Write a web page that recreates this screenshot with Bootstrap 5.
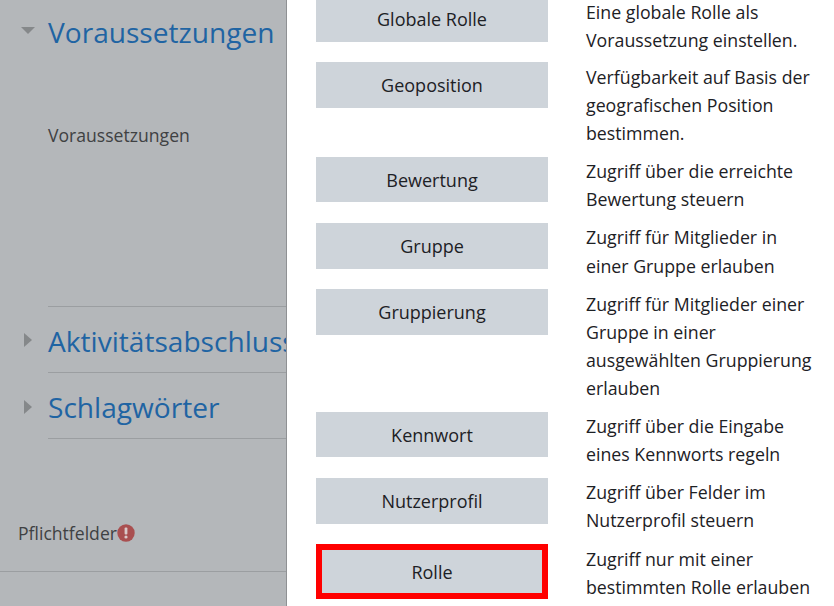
<!doctype html>
<html lang="de">
<head>
<meta charset="utf-8">
<title>Voraussetzungen</title>
<link href="https://cdn.jsdelivr.net/npm/bootstrap@5.3.0/dist/css/bootstrap.min.css" rel="stylesheet">
<style>
html,body{height:606px;overflow:hidden;}
body{font-family:"Open Sans","Noto Sans",sans-serif;font-size:17.75px;line-height:1.5;color:#1d2125;background:#fff;}
.shell{height:606px;}
.backpane{width:287px;flex:none;background:#b4b7ba;border-right:1px solid #8f9194;overflow:hidden;color:#3f4143;position:relative;font-size:17.6px;}
.sect{display:flex;align-items:center;height:66px;margin-left:48px;padding-top:2px;border-bottom:1px solid #9b9ea1;white-space:nowrap;}
.sect-title{font-size:28.1px;line-height:36px;color:#1f64a3;margin:0;font-weight:400;}
.sect-first{height:auto;border:0;padding-top:14px;}
.caret{position:absolute;left:20px;}
.req-label{margin:72px 0 0 48px;height:185px;border-bottom:1px solid #9b9ea1;}
.foot-note{margin-top:79px;padding:0 0 24px 18px;border-bottom:1px solid #9b9ea1;height:54px;line-height:28px;}
.pick{flex:1;margin-top:-3.85px;padding-left:29px;}
.pick-row{display:flex;margin-bottom:9.6px;}
.pick-row-top{margin-bottom:8px;}
.pick-row-top .pick-text{margin-top:1.6px;}
.pick-btn{width:232px;height:45.6px;flex:none;background:#ced4da;border:0;border-radius:0;color:#1d2125;font-size:18px;padding:1.2px 0 0;margin-right:38px;}
.pick-btn.is-marked{height:55px;border:6px solid #f00;}
.pick-text{width:232px;line-height:28.125px;padding-top:.4px;}
</style>
</head>
<body>
<div class="shell d-flex">
  <div class="backpane">
    <svg class="caret" style="top:27px" width="16" height="8" viewBox="0 0 16 8"><path d="M1 0h14L8 7z" fill="#85888a"/></svg>
    <div class="sect sect-first"><h3 class="sect-title">Voraussetzungen</h3></div>
    <div class="req-label">Voraussetzungen</div>
    <svg class="caret" style="top:332px;left:24px" width="9" height="16" viewBox="0 0 9 16"><path d="M0 1v14l8-7z" fill="#85888a"/></svg>
    <div class="sect"><h3 class="sect-title">Aktivitätsabschluss</h3></div>
    <svg class="caret" style="top:399px;left:24px" width="9" height="16" viewBox="0 0 9 16"><path d="M0 1v14l8-7z" fill="#85888a"/></svg>
    <div class="sect"><h3 class="sect-title">Schlagwörter</h3></div>
    <div class="foot-note d-flex align-items-center">Pflichtfelder<svg width="18" height="18" viewBox="0 0 18 18"><circle cx="9" cy="9" r="8.7" fill="#a94f50"/><rect x="7.6" y="3.5" width="2.8" height="7" rx="1" fill="#d9c9c9"/><circle cx="9" cy="13" r="1.6" fill="#d9c9c9"/></svg></div>
  </div>
  <div class="pick">
    <div class="pick-row pick-row-top"><button class="btn pick-btn">Globale Rolle</button><div class="pick-text">Eine globale Rolle als Voraussetzung einstellen.</div></div>
    <div class="pick-row"><button class="btn pick-btn">Geoposition</button><div class="pick-text">Verfügbarkeit auf Basis der geografischen Position bestimmen.</div></div>
    <div class="pick-row"><button class="btn pick-btn">Bewertung</button><div class="pick-text">Zugriff über die erreichte Bewertung steuern</div></div>
    <div class="pick-row"><button class="btn pick-btn">Gruppe</button><div class="pick-text">Zugriff für Mitglieder in einer Gruppe erlauben</div></div>
    <div class="pick-row"><button class="btn pick-btn">Gruppierung</button><div class="pick-text">Zugriff für Mitglieder einer Gruppe in einer ausgewählten Gruppierung erlauben</div></div>
    <div class="pick-row"><button class="btn pick-btn">Kennwort</button><div class="pick-text">Zugriff über die Eingabe eines Kennworts regeln</div></div>
    <div class="pick-row"><button class="btn pick-btn">Nutzerprofil</button><div class="pick-text">Zugriff über Felder im Nutzerprofil steuern</div></div>
    <div class="pick-row"><button class="btn pick-btn is-marked">Rolle</button><div class="pick-text">Zugriff nur mit einer bestimmten Rolle erlauben</div></div>
  </div>
</div>
<script src="https://cdn.jsdelivr.net/npm/bootstrap@5.3.0/dist/js/bootstrap.bundle.min.js"></script>
</body>
</html>
